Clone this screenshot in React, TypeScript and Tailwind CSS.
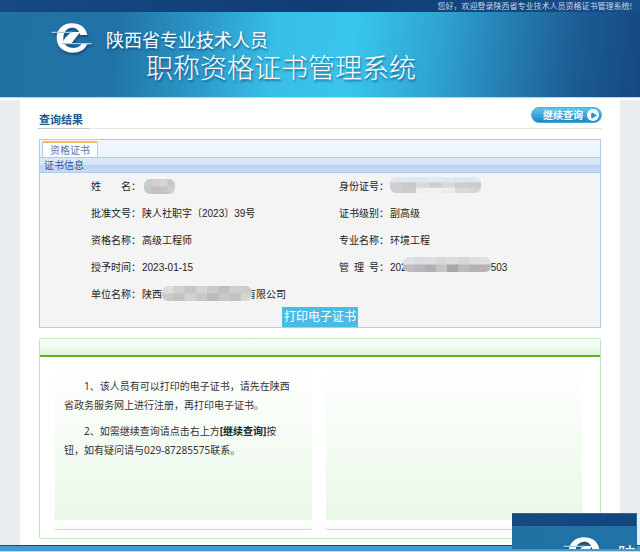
import { Play } from 'lucide-react';
import clsx from 'clsx';
import type { ReactNode } from 'react';

type MosaicProps = {
  width: number;
  height: number;
  colors: string[][];
  className?: string;
};

// Hides a part of the personal data behind coloured blocks
function Mosaic({ width, height, colors, className }: MosaicProps) {
  return (
    <svg
      width={width}
      height={height}
      viewBox={`0 0 ${width} ${height}`}
      preserveAspectRatio="none"
      className={clsx('relative shrink-0 rounded-md', className)}
      aria-hidden="true"
    >
      {colors.map((row, y) =>
        row.map((color, x) => (
          <rect
            key={`${x}-${y}`}
            x={(x * width) / row.length}
            y={(y * height) / colors.length}
            width={width / row.length + 1}
            height={height / colors.length + 1}
            fill={color}
          />
        ))
      )}
    </svg>
  );
}

function Logo() {
  return (
    <svg
      width="42"
      height="32"
      viewBox="153 65 126 96"
      className="shrink-0 drop-shadow-[1px_2px_1px_rgba(10,50,90,0.6)]"
      aria-hidden="true"
    >
      <path
        fill="#fff"
        d="M262 104C258 82 241 69 215 69c-27 0-45 19-45 44 0 26 20 44 48 44 20 0 36-8 44-26h-17c-6 8-14 12-25 12-18 0-30-11-30-27 0-21 10-34 27-34 12 0 21 8 24 22z"
      />
      <path fill="#fff" d="M184 131l12-19 18-17h27l-10 13-18 23z" />
      <path stroke="#a9c9de" strokeWidth="4" d="M155 96h62M186 130h89" />
    </svg>
  );
}

function Header({ preview = false }: { preview?: boolean }) {
  return (
    <header className="font-['Noto_Sans_CJK_SC',sans-serif]">
      <div className="flex h-3 items-center justify-end bg-linear-to-r from-[#154a82] via-[#123c74] to-[#164f89] pr-2 text-[8px] leading-3 text-[#c5d8ea]">
        {!preview && '您好，欢迎登录陕西省专业技术人员资格证书管理系统!'}
      </div>
      <div className="flex h-[85px] items-start bg-[linear-gradient(97deg,#2171a5_0%,#2172a6_18%,#2c9aca_32%,#38bfe6_43%,#39c5ec_55%,#2fa3d2_68%,#2680b4_78%,#1b5a93_90%,#154882_100%)] pt-2.5 pl-[51px] text-white">
        <Logo />
        <div className="pt-[3px] pl-[13px] whitespace-nowrap [text-shadow:1px_2px_2px_rgba(10,60,100,0.6)]">
          {preview ? (
            <p className="text-[18px] leading-7">陕</p>
          ) : (
            <>
              <p className="text-[18px] leading-7">陕西省专业技术人员</p>
              <p className="pl-10 font-['KaiTi','Noto_Sans_CJK_SC',sans-serif] text-[27px] leading-7 font-light">
                职称资格证书管理系统
              </p>
            </>
          )}
        </div>
      </div>
    </header>
  );
}

function Field({ label, children }: { label: ReactNode; children: ReactNode }) {
  return (
    <div className="flex h-[27px] items-center">
      <dt className="w-[51px] shrink-0 whitespace-pre">{label}</dt>
      <dd className="flex items-center whitespace-nowrap">{children}</dd>
    </div>
  );
}

function Tip({ children }: { children?: ReactNode }) {
  return (
    <div className="min-w-0 flex-1">
      <div className="mx-px h-[151px] bg-linear-to-b from-[#fefffe] to-[#eaf8e8] px-[9px] pt-2 text-[10px] leading-[19px] text-[#333]">
        {children}
      </div>
      <div className="mt-[7px] h-[3px] rounded-b-sm border-b border-[#c6e6c4] bg-[#f3fbf2]" />
    </div>
  );
}

export default function App() {
  return (
    <div className="bg-[#e9edef] font-['Noto_Sans','Noto_Sans_CJK_SC',sans-serif] text-[10px]">
      <Header />
      <div className="h-[3px] border-t border-[#a9dcf3] bg-white" />

      <main className="mx-5 bg-white px-[19px] pt-[7px] pb-1.5">
        <div className="-mx-px flex h-[22px] items-start justify-between border-b border-[#e3e5e7]">
          <h1 className="h-[22px] w-[51px] border-b border-[#c3c9cf] pt-1 pl-px text-[11px] leading-[18px] font-bold text-[#205a94]">
            查询结果
          </h1>
          <button
            type="button"
            className="flex h-4 w-[71px] items-center justify-end gap-1 rounded-full border border-[#4aaed8] bg-linear-to-b from-[#5cc8ea] to-[#1b86c8] pr-0.5 text-[10px] font-bold text-white"
          >
            继续查询
            <span className="flex h-3 w-3 items-center justify-center rounded-full bg-white">
              <Play size={7} fill="#2090cc" color="#2090cc" />
            </span>
          </button>
        </div>

        <section className="mt-2.5 border border-[#aecbee] bg-[#f4f4f4]">
          <div className="flex h-[17px] items-end bg-[#edf5fe] pl-0.5">
            <button
              type="button"
              className="h-4 w-14 rounded-t-xs border-x border-t-2 border-x-[#b5cdea] border-t-[#ffb660] bg-white text-[10px] leading-[15px] text-[#5578ac]"
            >
              资格证书
            </button>
          </div>
          <h2 className="h-4 border-y border-[#b0caea] bg-[linear-gradient(#d9e7f7_45%,#bfd3ef_50%,#c8d9f2)] pl-1 text-[10px] leading-[14px] text-[#2b5797]">
            证书信息
          </h2>
          <div className="grid grid-cols-[248fr_261fr] pl-[51px] font-['Liberation_Sans','Noto_Sans_CJK_SC',sans-serif] text-[10px] text-[#222]">
            <dl>
              <Field label={'姓\u3000\u3000名：'}>
                <Mosaic
                  width={31}
                  height={15}
                  className="ml-0.5"
                  colors={[
                    ['#c9cbcd', '#d3cfcf', '#d8d4d2', '#c6c8ca'],
                    ['#c4c8cc', '#cbbfbd', '#c2c4c8', '#cbcdcf'],
                  ]}
                />
              </Field>
              <Field label="批准文号：">陕人社职字〔2023〕39号</Field>
              <Field label="资格名称：">高级工程师</Field>
              <Field label="授予时间：">2023-01-15</Field>
              <Field label="单位名称：">
                陕西
                <Mosaic
                  width={90}
                  height={15}
                  className="-mt-0.5"
                  colors={[
                    ['#dcdcdc', '#cfcfd0', '#c6c5c6', '#d5d3d3', '#cbc9ca', '#c1bfc0', '#cfcdce', '#cdcdcd'],
                    ['#c9c9ca', '#c4c2c3', '#d3d1d2', '#c8c6c7', '#bdbabb', '#c9c7c8', '#c3c1c2', '#d6d6d3'],
                  ]}
                />
                <span className="-ml-1.5">有限公司</span>
              </Field>
            </dl>
            <dl>
              <Field label="身份证号：">
                <Mosaic
                  width={91}
                  height={16}
                  className="-mt-1"
                  colors={[
                    ['#e0e7f0', '#e0e7f0', '#e1e8f1', '#e1e8f1', '#dfe7f1', '#dde6f1', '#dfe7f1'],
                    ['#cfcfd1', '#c8c8ca', '#d9d9da', '#cfcfd0', '#d8d8d9', '#ccccce', '#cacacc'],
                    ['#cfcfd1', '#cbcbcd', '#efefef', '#f1f1f1', '#ededed', '#dadadb', '#d6d6d7'],
                  ]}
                />
              </Field>
              <Field label="证书级别：">副高级</Field>
              <Field label="专业名称：">环境工程</Field>
              <Field label="管&ensp;理&ensp;号：">
                202
                <Mosaic
                  width={88}
                  height={15}
                  className="-mt-1.5 -ml-1"
                  colors={[
                    ['#dfe1e2', '#dadcdd', '#dddfdf', '#d8d8d9', '#dcdcdc', '#d6d8d8', '#dddddf', '#dfdfdf'],
                    ['#bcbfc2', '#b9b8bf', '#b3afb6', '#c5c5c7', '#a7a5a5', '#bcbcbf', '#b7b1b8', '#b9b2b9'],
                  ]}
                />
                503
              </Field>
            </dl>
          </div>
          <div className="flex h-[19px] items-end justify-center">
            <button
              type="button"
              className="h-5 bg-[#4abbe5] px-0.5 text-[12px] leading-5 text-white"
            >
              打印电子证书
            </button>
          </div>
        </section>

        <section className="mt-2.5 rounded-xs border border-[#c3e6c1]">
          <div className="h-[18px] border-b-2 border-[#5cb31d] bg-linear-to-b from-white to-[#e1f5de]" />
          <div className="flex gap-3 pt-3 pr-[17px] pb-2 pl-3.5">
            <Tip>
              <p className="indent-5">
                1、该人员有可以打印的电子证书，请先在陕西
                <br />
                省政务服务网上进行注册，再打印电子证书。
              </p>
              <p className="mt-[7px] indent-5">
                2、如需继续查询请点击右上方
                <b className="text-[#222]">[继续查询]</b>按
                <br />
                钮，如有疑问请与029-87285575联系。
              </p>
            </Tip>
            <Tip />
          </div>
        </section>
      </main>

      <footer className="h-[7px] border-t border-b border-t-[#1c4680] border-b-[#b5def3] bg-[#4299d1]" />

      {/* floating preview of the page's top left corner */}
      <div
        className="fixed right-[3px] bottom-[3px] h-9 w-[125px] overflow-hidden border-t border-r border-[#2c69a5]"
        aria-hidden="true"
      >
        <div className="w-screen">
          <Header preview />
        </div>
      </div>
    </div>
  );
}
